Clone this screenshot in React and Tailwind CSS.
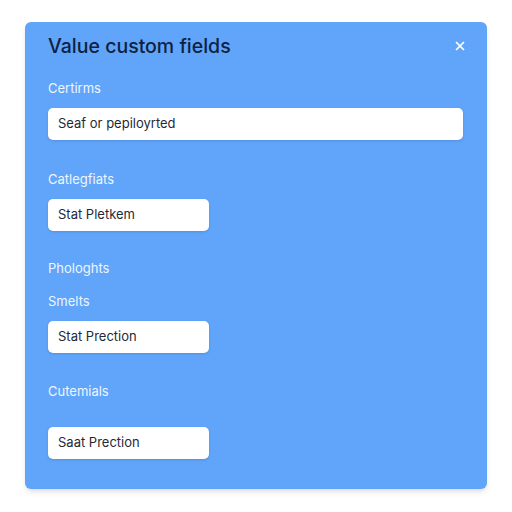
import { X } from 'lucide-react';

const Field = ({ value, wide }) => (
  <div
    className={`h-[32px] ${wide ? 'w-[415px]' : 'w-[161px]'} bg-white rounded-[5px] flex items-center pl-[10px] text-[13px] text-[#1f2a37] shadow-sm`}
  >
    {value}
  </div>
);

const Label = ({ children, className = '' }) => (
  <div className={`text-[13px] leading-[16px] text-[#eef5ff] ${className}`}>{children}</div>
);

export default function App() {
  return (
    <div
      className="w-[512px] h-[512px] bg-white pt-[22px] pl-[25px]"
      style={{ fontFamily: 'Inter, "Noto Sans", sans-serif' }}
    >
      <div className="w-[462px] h-[467px] bg-[#60a5fa] rounded-[6px] shadow-md pt-[12px] pl-[23px] pr-[24px]">
        <div className="flex items-center justify-between h-[24px]">
          <h1 className="text-[19.5px] leading-[24px] font-medium text-[#0e2240]">Value custom fields</h1>
          <X className="w-[14px] h-[14px] text-white mr-[-4px]" strokeWidth={3} />
        </div>

        <Label className="mt-[22px]">Certirms</Label>
        <div className="mt-[12px]">
          <Field value="Seaf or pepiloyrted" wide />
        </div>

        <Label className="mt-[31px]">Catlegfiats</Label>
        <div className="mt-[12px]">
          <Field value="Stat Pletkem" />
        </div>

        <Label className="mt-[29px]">Phologhts</Label>
        <Label className="mt-[17px]">Smelts</Label>
        <div className="mt-[12px]">
          <Field value="Stat Prection" />
        </div>

        <Label className="mt-[30px]">Cutemials</Label>
        <div className="mt-[28px]">
          <Field value="Saat Prection" />
        </div>
      </div>
    </div>
  );
}
